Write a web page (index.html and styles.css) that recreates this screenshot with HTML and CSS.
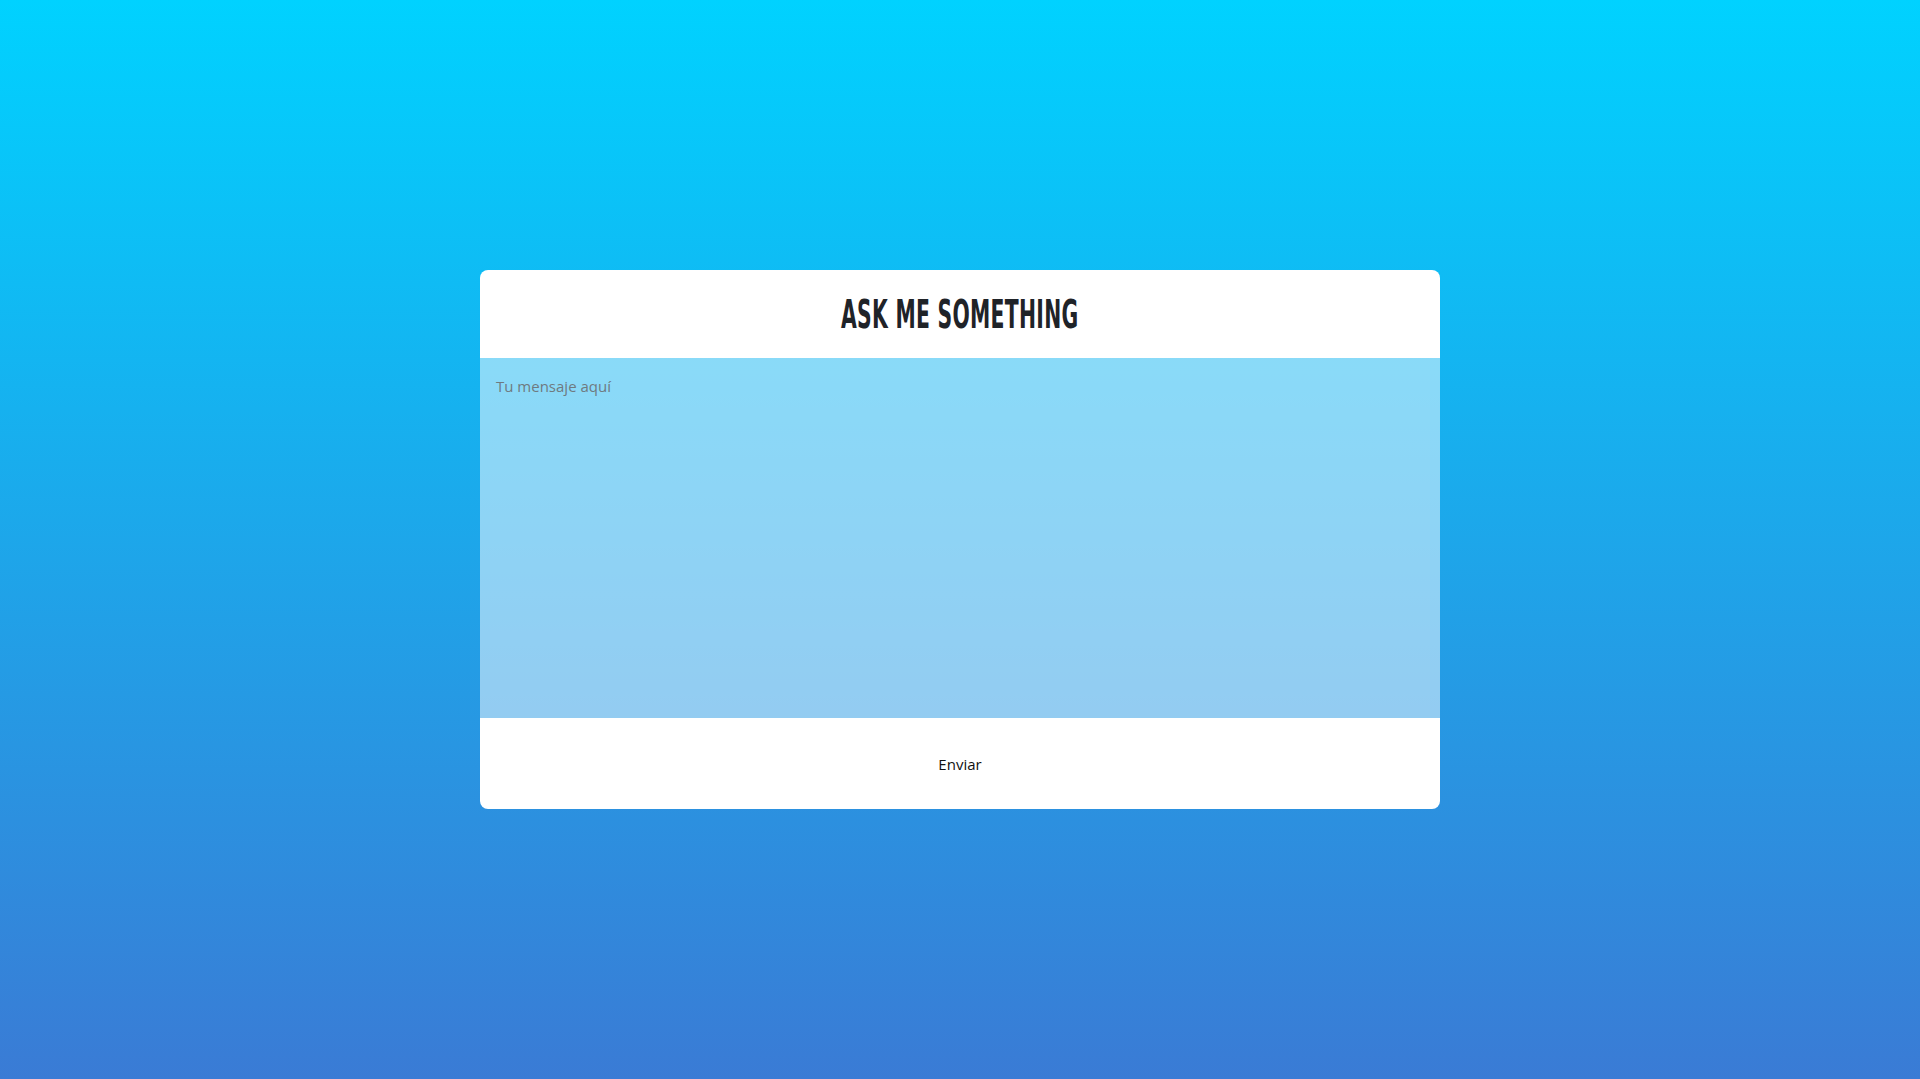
FILE: index.html
```html
<!DOCTYPE html>
<html lang="es">
<head>
<meta charset="utf-8">
<title>Ask me something</title>
<link rel="stylesheet" href="styles.css">
</head>
<body>
<main class="page">
  <form class="card">
    <header class="card-head">
      <h1 class="title">Ask me something</h1>
    </header>
    <textarea class="message" placeholder="Tu mensaje aquí"></textarea>
    <div class="card-foot">
      <button type="button" class="send">Enviar</button>
    </div>
  </form>
</main>
</body>
</html>
```

FILE: styles.css
```css
html, body {
  margin: 0;
  height: 100%;
}
body {
  background: linear-gradient(to bottom, #00d2ff 0%, #3a7bd5 100%);
  font-family: "Open Sans", "Noto Sans", sans-serif;
}
.page {
  height: 1079px;
  display: flex;
  justify-content: center;
  padding-top: 270px;
  box-sizing: border-box;
}
.card {
  width: 960px;
  height: 539px;
  display: flex;
  flex-direction: column;
  border-radius: 8px;
  overflow: hidden;
}
.card-head {
  background: #fff;
  height: 88px;
  display: flex;
  align-items: center;
  justify-content: center;
}
.title {
  margin: 0;
  font-family: "DejaVu Sans Condensed", "DejaVu Sans", sans-serif;
  font-weight: 700;
  font-size: 39px;
  text-transform: uppercase;
  color: #1f2328;
  letter-spacing: 0.5px;
  transform: scaleX(0.58);
  line-height: 1;
}
.message {
  display: block;
  height: 360px;
  border: 0;
  margin: 0;
  resize: none;
  background: rgba(255, 255, 255, 0.5);
  padding: 18px 16px 16px;
  font-family: "Open Sans", "Noto Sans", sans-serif;
  font-size: 15px;
  color: #333;
  box-sizing: border-box;
  outline: none;
}
.message::placeholder {
  color: #6f7a80;
}
.card-foot {
  flex: 1;
  background: #fff;
  display: flex;
  align-items: center;
  justify-content: center;
}
.send {
  border: 0;
  background: transparent;
  font-family: "Open Sans", "Noto Sans", sans-serif;
  font-size: 15px;
  color: #111;
  padding: 0;
  cursor: pointer;
}
```
